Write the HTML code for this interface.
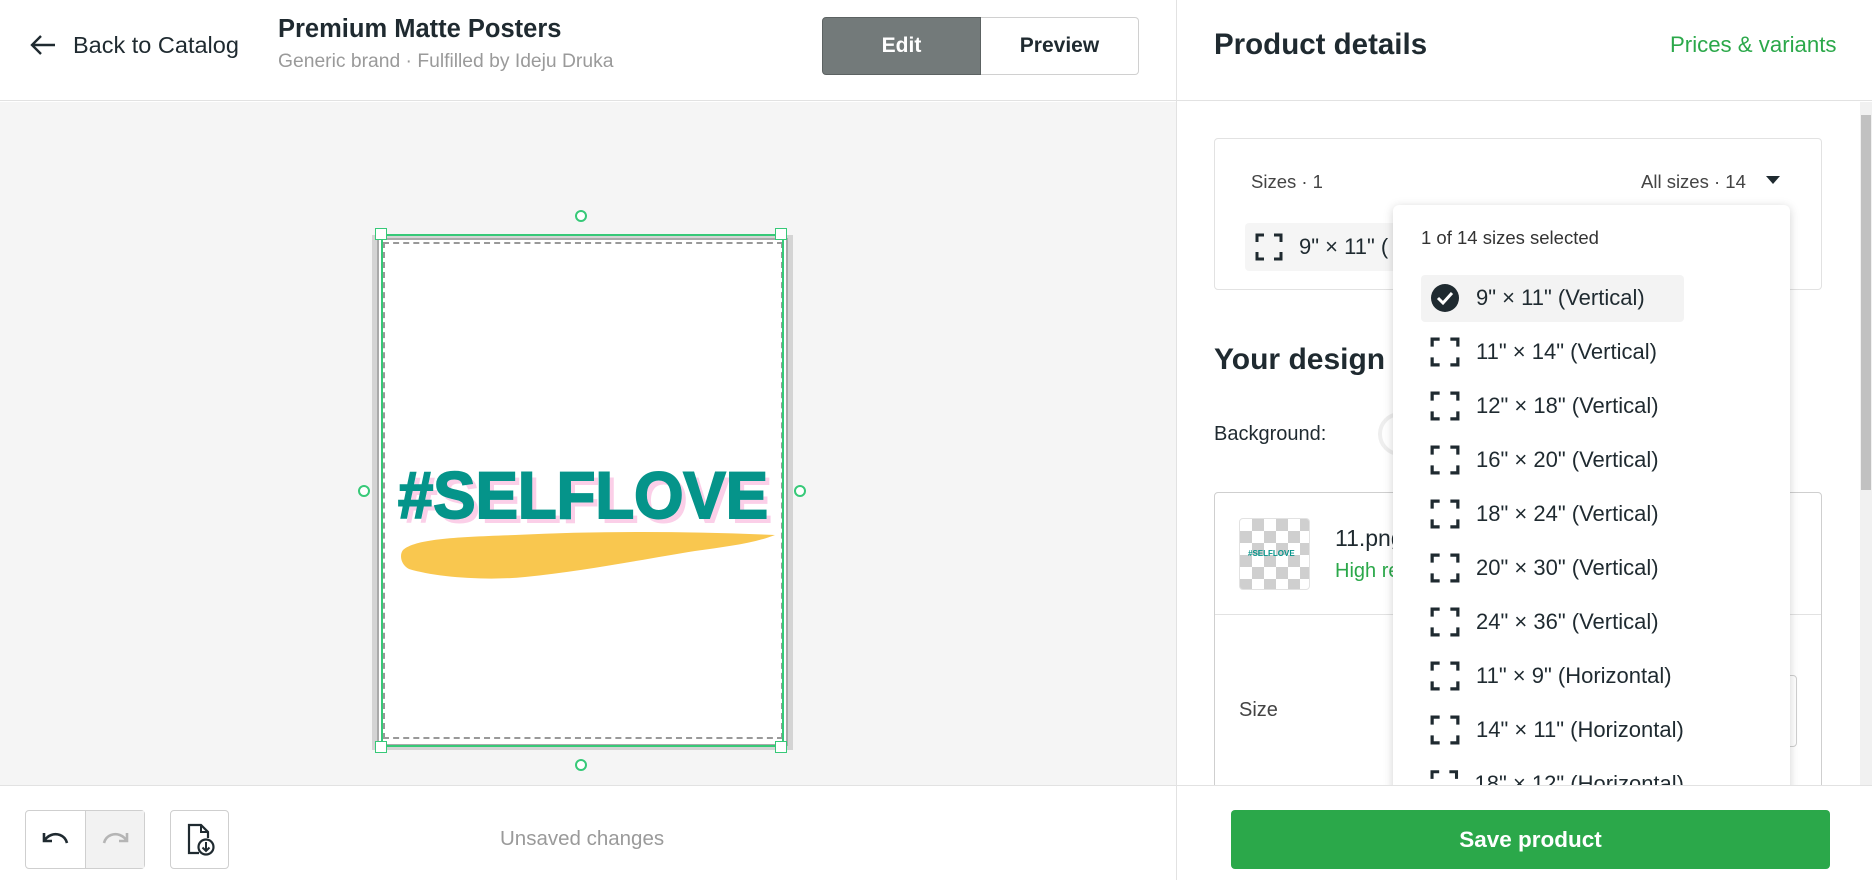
<!DOCTYPE html>
<html><head><meta charset="utf-8"><style>
*{box-sizing:border-box;margin:0;padding:0}
body{width:1872px;height:880px;overflow:hidden;font-family:"Liberation Sans",sans-serif;color:#1f2a30;background:#fff;position:relative}
.a{position:absolute}
.dd-item{position:absolute;left:1421px;width:263px;height:48px;display:flex;align-items:center;font-size:22px;color:#1f2a30;white-space:nowrap}
.dd-item svg{margin-left:9px;margin-right:16px}
</style></head><body>
<!-- header -->
<div class="a" style="left:0;top:0;width:1176px;height:101px;border-bottom:1px solid #e2e2e2"></div>
<svg class="a" style="left:29px;top:33px" width="28" height="24" viewBox="0 0 28 24"><path d="M26 12H3M12 3L3 12l9 9" fill="none" stroke="#1f2a30" stroke-width="2.4"/></svg>
<div class="a" style="left:73px;top:32px;font-size:23.5px">Back to Catalog</div>
<div class="a" style="left:278px;top:15px;font-size:25.5px;font-weight:bold">Premium Matte Posters</div>
<div class="a" style="left:278px;top:51px;font-size:19.3px;color:#9a9a9a">Generic brand · Fulfilled by Ideju Druka</div>
<div class="a" style="left:822px;top:17px;width:159px;height:58px;background:#737a7a;border:1px solid #5c6262;border-radius:4px 0 0 4px;color:#fff;font-size:21px;font-weight:bold;display:flex;align-items:center;justify-content:center">Edit</div>
<div class="a" style="left:981px;top:17px;width:158px;height:58px;border:1px solid #d0d0d0;border-left:none;border-radius:0 4px 4px 0;font-size:21px;font-weight:bold;display:flex;align-items:center;justify-content:center">Preview</div>
<div class="a" style="left:1176px;top:0;width:1px;height:880px;background:#e2e2e2"></div>
<div class="a" style="left:1177px;top:0;width:695px;height:101px;border-bottom:1px solid #e2e2e2"></div>
<div class="a" style="left:1214px;top:28px;font-size:29.5px;font-weight:bold">Product details</div>
<div class="a" style="left:1670px;top:32px;font-size:22.2px;color:#2ba84a">Prices &amp; variants</div>
<!-- canvas -->
<div class="a" style="left:0;top:102px;width:1176px;height:683px;background:#f5f5f5"></div>
<div class="a" style="left:372px;top:235px;width:421px;height:515px;background:#d4d4d4"></div>
<div class="a" style="left:377px;top:238px;width:411px;height:508px;background:#fff;border:2px solid #aaa"></div>
<div class="a" style="left:383px;top:242px;width:400px;height:497px;border:2px dashed #999"></div>
<div class="a" style="left:381px;top:234px;width:403px;height:513px;border:2px solid #37c978"></div>
<svg class="a" style="left:395px;top:455px" width="390" height="135" viewBox="0 0 390 135">
<path d="M8 95 C20 84 60 82 120 80 C200 76 290 76 380 80 C360 88 330 92 300 96 C250 104 190 116 130 122 C90 126 40 122 14 114 C6 110 4 100 8 95 Z" fill="#f9c74f"/>
<text x="8" y="68" font-family="Liberation Sans" font-weight="bold" font-size="66" fill="#fbcfe8" textLength="370" lengthAdjust="spacingAndGlyphs">#SELFLOVE</text>
<text x="3" y="63" font-family="Liberation Sans" font-weight="bold" font-size="66" fill="#05948a" stroke="#05948a" stroke-width="2" textLength="370" lengthAdjust="spacingAndGlyphs">#SELFLOVE</text>
</svg>
<div class="a" style="left:375px;top:228px;width:12px;height:12px;background:#fff;border:1.5px solid #37c978"></div>
<div class="a" style="left:775px;top:228px;width:12px;height:12px;background:#fff;border:1.5px solid #37c978"></div>
<div class="a" style="left:375px;top:741px;width:12px;height:12px;background:#fff;border:1.5px solid #37c978"></div>
<div class="a" style="left:775px;top:741px;width:12px;height:12px;background:#fff;border:1.5px solid #37c978"></div>
<div class="a" style="left:575px;top:210px;width:12px;height:12px;border-radius:50%;border:2px solid #37c978;background:#fff"></div>
<div class="a" style="left:575px;top:759px;width:12px;height:12px;border-radius:50%;border:2px solid #37c978;background:#fff"></div>
<div class="a" style="left:358px;top:485px;width:12px;height:12px;border-radius:50%;border:2px solid #37c978;background:#fff"></div>
<div class="a" style="left:794px;top:485px;width:12px;height:12px;border-radius:50%;border:2px solid #37c978;background:#fff"></div>
<!-- bottom bar -->
<div class="a" style="left:0;top:785px;width:1176px;height:1px;background:#e2e2e2"></div>
<div class="a" style="left:25px;top:810px;width:120px;height:59px;border:1px solid #cfcfcf;border-radius:4px;display:flex">
<div style="width:60px;display:flex;align-items:center;justify-content:center;border-right:1px solid #cfcfcf"><svg width="32" height="22" viewBox="0 0 32 22"><path d="M4 4v8h8M4 12C8 6 14 4 20 6c4 1.5 6 4 7 8" fill="none" stroke="#1f2a30" stroke-width="2.6"/></svg></div>
<div style="flex:1;background:#f2f2f2;display:flex;align-items:center;justify-content:center"><svg width="32" height="22" viewBox="0 0 32 22"><path d="M28 4v8h-8M28 12C24 6 18 4 12 6c-4 1.5-6 4-7 8" fill="none" stroke="#b5b5b5" stroke-width="2.6"/></svg></div></div>
<div class="a" style="left:170px;top:810px;width:59px;height:59px;border:1px solid #cfcfcf;border-radius:4px;display:flex;align-items:center;justify-content:center"><svg width="30" height="34" viewBox="0 0 30 34"><path d="M14 30H4V2h12l7 7v6" fill="none" stroke="#1f2a30" stroke-width="2.2"/><path d="M16 2v7h7" fill="none" stroke="#1f2a30" stroke-width="2"/><circle cx="21" cy="24" r="7.5" fill="none" stroke="#1f2a30" stroke-width="2.2"/><path d="M21 19v9M17.5 24.5l3.5 3.5 3.5-3.5" fill="none" stroke="#1f2a30" stroke-width="2"/></svg></div>
<div class="a" style="left:500px;top:827px;font-size:20.5px;color:#9a9a9a">Unsaved changes</div>
<!-- right panel -->
<div class="a" style="left:1860px;top:102px;width:12px;height:683px;background:#f1f1f1"></div>
<div class="a" style="left:1861px;top:115px;width:10px;height:375px;background:#c1c1c1"></div>
<div class="a" style="left:1214px;top:138px;width:608px;height:152px;border:1px solid #e2e2e2;border-radius:4px"></div>
<div class="a" style="left:1251px;top:171px;font-size:18.5px;color:#444">Sizes · 1</div>
<div class="a" style="left:1641px;top:171px;font-size:18.5px;color:#444">All sizes · 14</div>
<svg class="a" style="left:1766px;top:176px" width="14" height="9"><path d="M0 0h14L7 8z" fill="#1f2a30"/></svg>
<div class="a" style="left:1245px;top:223px;width:160px;height:48px;background:#f5f5f5;border-radius:4px"></div>
<svg class="a" style="left:1255px;top:233px" width="28" height="28" viewBox="0 0 28 28"><path d="M2 9V2h7M19 2h7v7M26 19v7h-7M9 26H2v-7" fill="none" stroke="#1f2a30" stroke-width="3"/></svg>
<div class="a" style="left:1299px;top:234px;font-size:22px">9" × 11" (</div>
<div class="a" style="left:1214px;top:343px;font-size:30px;font-weight:bold">Your design</div>
<div class="a" style="left:1214px;top:423px;font-size:20px">Background:</div>
<div class="a" style="left:1378px;top:412px;width:44px;height:44px;border-radius:50%;border:4px solid #eee"></div>
<div class="a" style="left:1214px;top:492px;width:608px;height:300px;border:1px solid #cfcfcf;border-radius:4px"></div>
<div class="a" style="left:1239px;top:518px;width:71px;height:72px;border:1px solid #e2e2e2;border-radius:4px;background:repeating-conic-gradient(#cfcfcf 0 25%,#fff 0 50%) 0 0/24px 24px"></div>
<div class="a" style="left:1248px;top:549px;font-size:8px;font-weight:bold;color:#05948a">#SELFLOVE</div>
<div class="a" style="left:1335px;top:525px;font-size:23px">11.png</div>
<div class="a" style="left:1335px;top:560px;font-size:20px;color:#2ba84a">High res</div>
<div class="a" style="left:1215px;top:614px;width:606px;height:1px;background:#e2e2e2"></div>
<div class="a" style="left:1239px;top:699px;font-size:20px;color:#444">Size</div>
<div class="a" style="left:1600px;top:675px;width:197px;height:72px;border:1px solid #cfcfcf;border-radius:4px"></div>
<!-- dropdown -->
<div class="a" style="left:1393px;top:205px;width:397px;height:600px;background:#fff;border-radius:6px;box-shadow:0 2px 10px rgba(0,0,0,.18)"></div>
<div class="a" style="left:1421px;top:227px;font-size:18.5px;color:#333">1 of 14 sizes selected</div>
<div class="a" style="left:1421px;top:275px;width:263px;height:47px;background:#f3f3f3;border-radius:4px"></div>
<div class="dd-item" style="top:274px"><svg width="30" height="30" viewBox="0 0 30 30"><circle cx="15" cy="15" r="14" fill="#1f2a30"/><path d="M8 15l5 5 9-10" fill="none" stroke="#fff" stroke-width="3"/></svg>9" × 11" (Vertical)</div>
<div class="dd-item" style="top:328px"><svg width="30" height="30" viewBox="0 0 28 28"><path d="M2 9V2h7M19 2h7v7M26 19v7h-7M9 26H2v-7" fill="none" stroke="#1f2a30" stroke-width="3"/></svg>11" × 14" (Vertical)</div>
<div class="dd-item" style="top:382px"><svg width="30" height="30" viewBox="0 0 28 28"><path d="M2 9V2h7M19 2h7v7M26 19v7h-7M9 26H2v-7" fill="none" stroke="#1f2a30" stroke-width="3"/></svg>12" × 18" (Vertical)</div>
<div class="dd-item" style="top:436px"><svg width="30" height="30" viewBox="0 0 28 28"><path d="M2 9V2h7M19 2h7v7M26 19v7h-7M9 26H2v-7" fill="none" stroke="#1f2a30" stroke-width="3"/></svg>16" × 20" (Vertical)</div>
<div class="dd-item" style="top:490px"><svg width="30" height="30" viewBox="0 0 28 28"><path d="M2 9V2h7M19 2h7v7M26 19v7h-7M9 26H2v-7" fill="none" stroke="#1f2a30" stroke-width="3"/></svg>18" × 24" (Vertical)</div>
<div class="dd-item" style="top:544px"><svg width="30" height="30" viewBox="0 0 28 28"><path d="M2 9V2h7M19 2h7v7M26 19v7h-7M9 26H2v-7" fill="none" stroke="#1f2a30" stroke-width="3"/></svg>20" × 30" (Vertical)</div>
<div class="dd-item" style="top:598px"><svg width="30" height="30" viewBox="0 0 28 28"><path d="M2 9V2h7M19 2h7v7M26 19v7h-7M9 26H2v-7" fill="none" stroke="#1f2a30" stroke-width="3"/></svg>24" × 36" (Vertical)</div>
<div class="dd-item" style="top:652px"><svg width="30" height="30" viewBox="0 0 28 28"><path d="M2 9V2h7M19 2h7v7M26 19v7h-7M9 26H2v-7" fill="none" stroke="#1f2a30" stroke-width="3"/></svg>11" × 9" (Horizontal)</div>
<div class="dd-item" style="top:706px"><svg width="30" height="30" viewBox="0 0 28 28"><path d="M2 9V2h7M19 2h7v7M26 19v7h-7M9 26H2v-7" fill="none" stroke="#1f2a30" stroke-width="3"/></svg>14" × 11" (Horizontal)</div>
<div class="dd-item" style="top:760px"><svg width="30" height="30" viewBox="0 0 28 28"><path d="M2 9V2h7M19 2h7v7M26 19v7h-7M9 26H2v-7" fill="none" stroke="#1f2a30" stroke-width="3"/></svg>18" × 12" (Horizontal)</div>
<!-- cover bottom to clip dropdown -->
<div class="a" style="left:1177px;top:785px;width:695px;height:95px;background:#fff;border-top:1px solid #e2e2e2"></div>
<div class="a" style="left:1231px;top:810px;width:599px;height:59px;background:#2ba84a;border-radius:4px;color:#fff;font-size:22.5px;font-weight:bold;display:flex;align-items:center;justify-content:center">Save product</div>
</body></html>
